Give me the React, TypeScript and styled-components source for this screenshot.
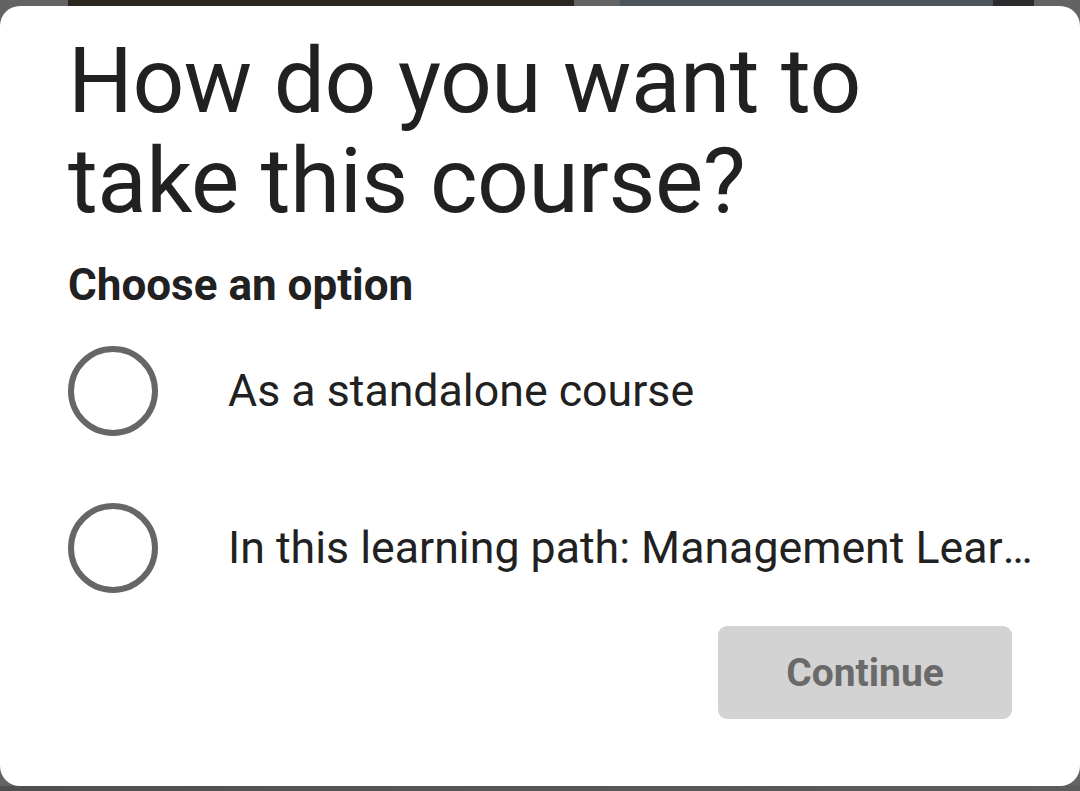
import React, { useState } from "react";
import styled, { createGlobalStyle } from "styled-components";

const GlobalStyle = createGlobalStyle`
  html, body { margin: 0; padding: 0; background: #616161; }
  body { font-family: Roboto, "Noto Sans", "Liberation Sans", sans-serif; }
  * { box-sizing: border-box; }
`;

const Screen = styled.div`
  width: 1080px;
  height: 791px;
  display: flex;
  flex-direction: column;
  background: #636363;
  overflow: hidden;
`;

const TopStrip = styled.div`
  height: 6px;
  display: flex;
  flex-shrink: 0;
`;

const Thumb = styled.div<{ $w: number; $bg: string; $ml: number }>`
  width: ${(p) => p.$w}px;
  margin-left: ${(p) => p.$ml}px;
  height: 100%;
  background: ${(p) => p.$bg};
`;

const BottomStrip = styled.div`
  height: 5px;
  flex-shrink: 0;
  background: linear-gradient(90deg, #4f4f4f 0%, #555 40%, #5c5c5c 100%);
`;

const Dialog = styled.div`
  height: 780px;
  flex-shrink: 0;
  background: #ffffff;
  border-radius: 20px;
  padding: 25px 36px 67px 68px;
  display: flex;
  flex-direction: column;
  color: #212121;
`;

const Title = styled.h1`
  margin: 0;
  font-size: 91px;
  line-height: 100px;
  font-weight: 400;
  letter-spacing: -0.5px;
`;

const Subtitle = styled.h2`
  margin: 28px 0 1px;
  font-size: 44px;
  font-weight: 700;
  line-height: 52px;
`;

const OptionList = styled.div`
  display: flex;
  flex-direction: column;
`;

const OptionRow = styled.label`
  height: 157px;
  display: flex;
  align-items: center;
  gap: 70px;
  cursor: pointer;
  min-width: 0;
`;

const Radio = styled.span<{ $checked: boolean }>`
  width: 90px;
  height: 90px;
  flex-shrink: 0;
  border-radius: 50%;
  border: 6px solid ${(p) => (p.$checked ? "#0a66c2" : "#666666")};
  display: flex;
  align-items: center;
  justify-content: center;
  &::after {
    content: "";
    width: 50px;
    height: 50px;
    border-radius: 50%;
    background: ${(p) => (p.$checked ? "#0a66c2" : "transparent")};
  }
`;

const OptionText = styled.span`
  font-size: 44.7px;
  line-height: 54px;
  white-space: nowrap;
  overflow: hidden;
  text-overflow: ellipsis;
  min-width: 0;
  flex: 1;
`;

const Footer = styled.div`
  display: flex;
  justify-content: flex-end;
  padding-right: 32px;
`;

const ContinueButton = styled.button`
  width: 294px;
  height: 93px;
  border: none;
  border-radius: 9px;
  background: #d3d3d3;
  color: #6a6a6a;
  font-family: inherit;
  font-size: 39px;
  font-weight: 700;
`;

const options = [
  "As a standalone course",
  "In this learning path: Management Learning Path",
];

export default function App() {
  const [selected, setSelected] = useState<number | null>(null);
  return (
    <>
      <GlobalStyle />
      <Screen>
        <TopStrip>
          <Thumb $ml={68} $w={506} $bg="#2b2620" />
          <Thumb $ml={46} $w={373} $bg="#4d555c" />
          <Thumb $ml={0} $w={41} $bg="#2c2c2f" />
        </TopStrip>
        <Dialog>
          <Title>
            How do you want to
            <br />
            take this course?
          </Title>
          <Subtitle>Choose an option</Subtitle>
          <OptionList>
            {options.map((o, i) => (
              <OptionRow key={o} onClick={() => setSelected(i)}>
                <Radio $checked={selected === i} />
                <OptionText>{o}</OptionText>
              </OptionRow>
            ))}
          </OptionList>
          <Footer>
            <ContinueButton disabled={selected === null}>Continue</ContinueButton>
          </Footer>
        </Dialog>
        <BottomStrip />
      </Screen>
    </>
  );
}
